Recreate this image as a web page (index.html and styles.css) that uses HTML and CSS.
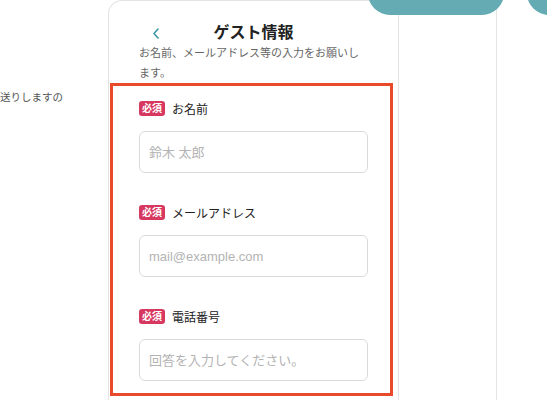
FILE: index.html
```html
<!doctype html>
<html lang="ja">
  <head>
    <meta charset="UTF-8" />
    <title>ゲスト情報</title>
    <link rel="stylesheet" href="styles.css">
  </head>
  <body>
    <div class="stage">
      <div class="side">
        <p class="side-note">送りしますの</p>
      </div>

      <section class="guest-card">
        <header class="guest-head">
          <button class="guest-back" type="button" aria-label="戻る">
            <svg width="8" height="11" viewBox="0 0 8 11">
              <path d="M6 1 L2 5.5 L6 10" fill="none" stroke="#3f97a7" stroke-width="1.6" stroke-linecap="round" stroke-linejoin="round" />
            </svg>
          </button>
          <h1 class="guest-title">ゲスト情報</h1>
        </header>
        <p class="guest-lead">お名前、メールアドレス等の入力をお願いします。</p>

        <form class="guest-form">
          <div class="guest-field">
            <label class="guest-label" for="name"><span class="guest-badge">必須</span>お名前</label>
            <input type="text" id="name" placeholder="鈴木 太郎" />
          </div>
          <div class="guest-field">
            <label class="guest-label" for="email"><span class="guest-badge">必須</span>メールアドレス</label>
            <input type="email" id="email" placeholder="mail@example.com" />
          </div>
          <div class="guest-field">
            <label class="guest-label" for="tel"><span class="guest-badge">必須</span>電話番号</label>
            <input type="tel" id="tel" placeholder="回答を入力してください。" />
          </div>
        </form>
      </section>

      <section class="next-card"></section>

      <div class="pill pill-a"></div>
      <div class="pill pill-b"></div>
    </div>
  </body>
</html>
```

FILE: styles.css
```css
:root {
  --teal: #64abb4;
  --line: #e4e4e4;
  --badge: #d6385f;
  --mark: #e84a2b;
  --dark-text: #222222;
  --sub-text: #666666;
}

* {
  box-sizing: border-box;
  font-family: "Liberation Sans", "Noto Sans CJK JP", sans-serif;
}

body {
  margin: 0;
  background: #ffffff;
  color: var(--dark-text);
}

.stage {
  position: relative;
  display: flex;
  height: 400px;
  overflow: hidden;
}

.side {
  width: 108px;
  flex-shrink: 0;
}

.side-note {
  margin: 89px 0 0;
  font-size: 10.5px;
  line-height: 16px;
  color: #555555;
  white-space: nowrap;
}

.guest-card {
  width: 291px;
  flex-shrink: 0;
  min-height: 440px;
  border: 1px solid var(--line);
  border-bottom: none;
  border-radius: 14px 14px 0 0;
}

.guest-head {
  display: grid;
  grid-template-columns: 1fr auto 1fr;
  align-items: center;
  height: 20px;
  margin-top: 22px;
  padding: 0 30px;
}

.guest-back {
  justify-self: start;
  margin-left: 13px;
  padding: 0;
  border: none;
  background: none;
  display: flex;
  cursor: pointer;
}

.guest-title {
  margin: 0;
  font-size: 16px;
  line-height: 20px;
  font-weight: bold;
}

.guest-lead {
  margin: 0;
  padding: 0 30px;
  font-size: 11px;
  line-height: 20px;
  color: var(--sub-text);
}

.guest-form {
  display: flex;
  flex-direction: column;
  gap: 31px;
  margin: 0 5px 0 1px;
  padding: 14px 22px 12px 26px;
  border: 3px solid var(--mark);
}

.guest-field {
  display: flex;
  flex-direction: column;
}

.guest-label {
  display: flex;
  align-items: center;
  gap: 7px;
  height: 16px;
  margin-bottom: 15px;
  font-size: 12px;
}

.guest-badge {
  height: 15px;
  padding: 0 3px;
  border-radius: 3px;
  background: var(--badge);
  color: #ffffff;
  font-size: 10px;
  line-height: 15px;
  font-weight: bold;
}

.guest-field input {
  width: 100%;
  height: 42px;
  padding: 0 9px;
  border: 1px solid #dadada;
  border-radius: 6px;
  font-size: 13px;
  color: var(--dark-text);
}

.guest-field input::placeholder {
  color: #b3b3b3;
}

.next-card {
  flex: 1;
  margin-left: 97px;
  border-left: 1px solid var(--line);
}

.pill {
  position: absolute;
  top: -30px;
  height: 45px;
  border-radius: 22px;
  background: var(--teal);
}

.pill-a {
  left: 368px;
  width: 136px;
}

.pill-b {
  left: 527px;
  width: 80px;
}
```
